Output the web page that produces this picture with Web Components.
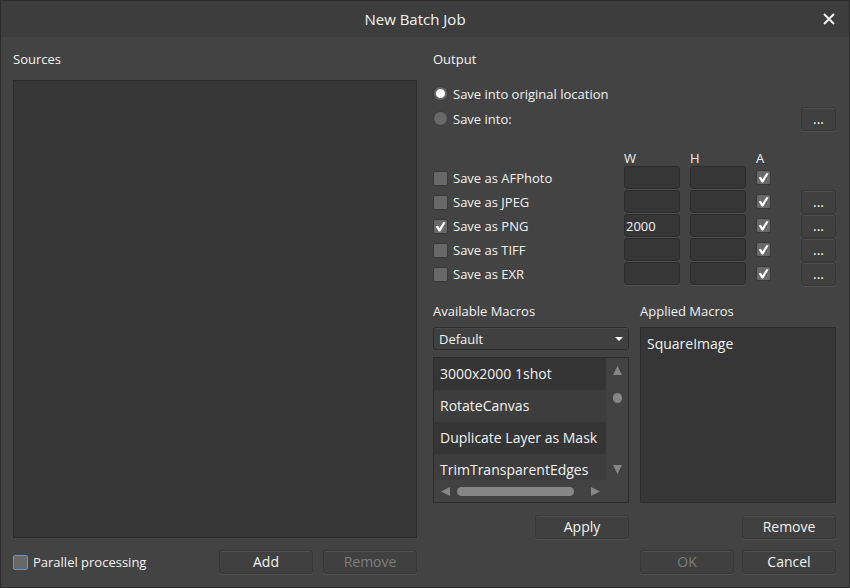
<!DOCTYPE html>
<html lang="en">
<head>
<meta charset="utf-8">
<title>New Batch Job</title>
<style>
body {
  margin: 0;
  background: #434343;
  color: #f2f2f2;
  font: 13px/20px "Open Sans", "Noto Sans", sans-serif;
}
</style>
</head>
<body>

<batch-dialog heading="New Batch Job">
  <sources-panel slot="sources"></sources-panel>
  <output-panel slot="output"></output-panel>
</batch-dialog>

<script>
const baseStyles = `
<style>
* { box-sizing: border-box; }
:host { display: block; box-sizing: border-box; }
h1, h2 { margin: 0; font-size: 13px; line-height: 20px; font-weight: 400; }
button, input, select { margin: 0; font: inherit; color: inherit; }
</style>
`;

function define(name, html, setup) {
  const template = document.createElement('template');
  template.innerHTML = baseStyles + html;

  customElements.define(name, class extends HTMLElement {
    constructor() {
      super();
      this.attachShadow({ mode: 'open' }).appendChild(template.content.cloneNode(true));
    }
    connectedCallback() {
      if (setup) setup(this, this.shadowRoot);
    }
  });
}

// push button, "small" is the one with the three dots
define('dialog-button', `
<style>
:host { width: 94px; height: 24px; }
:host([small]) { width: 35px; }
button {
  display: block;
  width: 100%;
  height: 24px;
  padding: 0;
  border: 1px solid #373737;
  border-radius: 3px;
  background: #404040;
  box-shadow: inset 0 1px #4f4f4f, 0 1px #505050;
  font-size: 14px;
  line-height: 22px;
}
button:disabled { color: #7d7d7d; }
</style>
<button type="button"><slot></slot></button>
`, (host, root) => {
  const button = root.querySelector('button');
  button.disabled = host.hasAttribute('disabled');
  if (host.title) button.setAttribute('aria-label', host.title);
});

// tick box with its label
define('check-box', `
<style>
label { display: flex; align-items: center; gap: 5px; white-space: nowrap; }
input {
  appearance: none;
  flex: none;
  width: 15px;
  height: 15px;
  border: 1px solid #383838;
  border-radius: 2px;
  background: #686868;
}
.box { display: grid; }
.box > * { grid-area: 1 / 1; }
svg { width: 15px; height: 15px; visibility: hidden; pointer-events: none; }
input:checked + svg { visibility: visible; }
:host([active]) input { border-color: #6b8fc9; }
</style>
<label>
  <span class="box">
    <input type="checkbox">
    <svg viewBox="0 0 15 15"><path d="M2.700 7.600 5 6.800l1.500 2.500 3.900-6.300 2.200.4-5.300 9H5.700z" fill="#fff"/></svg>
  </span>
  <slot></slot>
</label>
`, (host, root) => {
  const input = root.querySelector('input');
  input.checked = host.hasAttribute('checked');
  if (host.title) input.setAttribute('aria-label', host.title);
});

define('size-field', `
<style>
input {
  display: block;
  width: 100%;
  height: 23px;
  padding: 0 1px;
  border: 1px solid #2c2c2c;
  border-radius: 3px;
  background: #363636;
  box-shadow: 0 1px #515151;
  outline: none;
}
</style>
<input type="text">
`, (host, root) => {
  const input = root.querySelector('input');
  input.value = host.getAttribute('value') || '';
  input.setAttribute('aria-label', host.title);
});

define('save-location', `
<style>
.row { display: flex; align-items: center; justify-content: space-between; height: 25px; }
label { display: flex; align-items: center; gap: 5px; }
input {
  appearance: none;
  width: 15px;
  height: 15px;
  border: 1px solid #3a3a3a;
  border-radius: 50%;
  background: #686868;
}
input:checked { background: radial-gradient(circle, #fff 4px, #686868 5px); }
</style>
<div class="row">
  <label><input type="radio" name="location" checked>Save into original location</label>
</div>
<div class="row">
  <label><input type="radio" name="location">Save into:</label>
  <dialog-button small title="Choose folder">...</dialog-button>
</div>
`);

define('format-grid', `
<style>
.grid {
  display: grid;
  grid-template-columns: 1fr 56px 56px 35px 35px;
  grid-template-rows: 16px;
  grid-auto-rows: 24px;
  column-gap: 10px;
  align-items: start;
}
.head { line-height: 16px; }
check-box { padding-top: 2px; }
check-box[title] { padding-top: 4px; }
</style>
<div class="grid"></div>
`, (host, root) => {
  const formats = [
    { name: 'AFPhoto', options: false },
    { name: 'JPEG', options: true },
    { name: 'PNG', options: true, checked: true, width: '2000' },
    { name: 'TIFF', options: true },
    { name: 'EXR', options: true },
  ];
  let html = `
    <span></span>
    <span class="head">W</span>
    <span class="head">H</span>
    <span class="head">A</span>
    <span></span>`;
  formats.forEach(f => {
    html += `
    <check-box ${f.checked ? 'checked' : ''}>Save as ${f.name}</check-box>
    <size-field title="${f.name} width" value="${f.width || ''}"></size-field>
    <size-field title="${f.name} height"></size-field>
    <check-box checked title="${f.name} keep aspect"></check-box>
    ${f.options ? `<dialog-button small title="${f.name} options">...</dialog-button>` : '<span></span>'}`;
  });
  root.querySelector('.grid').innerHTML = html;
});

// dark framed area, grows with its column
define('list-frame', `
<style>
:host {
  flex: 1;
  min-height: 0;
  border: 1px solid #2b2b2b;
  background: #363636;
  font-size: 14px;
  line-height: 32px;
}
</style>
<slot></slot>
`);

define('macro-browser', `
<style>
:host {
  flex: 1;
  min-height: 0;
  display: grid;
  grid-template: minmax(0, 1fr) 22px / minmax(0, 1fr) 22px;
  border: 1px solid #2b2b2b;
  background: #424242;
}
ul { margin: 0; padding: 0; list-style: none; overflow: hidden; }
li { height: 32px; padding: 0 6px; font-size: 14px; line-height: 32px; white-space: nowrap; background: #3d3d3d; }
li:nth-child(odd) { background: #353535; }
.bar { display: flex; align-items: center; }
.vertical { flex-direction: column; padding: 8px 0 6px; }
.horizontal { padding: 0 6px 0 7px; gap: 7px; }
.track { flex: 1; display: flex; }
.thumb { background: #868686; border-radius: 5px; }
.vertical .track { padding-top: 18px; }
.vertical .thumb { width: 9px; height: 10px; }
.horizontal .thumb { width: 117px; height: 9px; }
svg { flex: none; width: 9px; height: 9px; fill: #868686; }
</style>
<ul>
  <li>3000x2000 1shot</li>
  <li>RotateCanvas</li>
  <li>Duplicate Layer as Mask</li>
  <li>TrimTransparentEdges</li>
</ul>
<div class="bar vertical">
  <svg viewBox="0 0 9 9"><path d="M0 9 4.500 0 9 9z"/></svg>
  <div class="track"><div class="thumb"></div></div>
  <svg viewBox="0 0 9 9"><path d="M0 0h9L4.500 9z"/></svg>
</div>
<div class="bar horizontal">
  <svg viewBox="0 0 9 9"><path d="M9 0v9L0 4.500z"/></svg>
  <div class="track"><div class="thumb"></div></div>
  <svg viewBox="0 0 9 9"><path d="M0 0v9l9-4.500z"/></svg>
</div>
`);

define('macro-select', `
<style>
:host { display: grid; align-items: center; margin-bottom: 7px; }
select, svg { grid-area: 1 / 1; }
select {
  appearance: none;
  width: 100%;
  height: 23px;
  padding: 0 20px 0 5px;
  border: 1px solid #2c2c2c;
  border-radius: 3px;
  background: #404040;
  box-shadow: inset 0 1px #4b4b4b;
}
svg { justify-self: end; width: 8px; height: 4px; margin-right: 6px; fill: #fff; pointer-events: none; }
</style>
<select aria-label="Macro category"><option>Default</option></select>
<svg viewBox="0 0 8 4"><path d="M0 0h8L4 4z"/></svg>
`);

define('sources-panel', `
<style>
:host { display: flex; flex-direction: column; min-height: 0; }
h2 { margin-bottom: 11px; }
.footer { display: flex; align-items: center; gap: 10px; margin-top: 12px; }
check-box { flex: 1; }
</style>
<h2>Sources</h2>
<list-frame></list-frame>
<div class="footer">
  <check-box active>Parallel processing</check-box>
  <dialog-button>Add</dialog-button>
  <dialog-button disabled>Remove</dialog-button>
</div>
`);

define('output-panel', `
<style>
:host { display: flex; flex-direction: column; min-height: 0; }
save-location { margin: 12px 0 19px; }
.macros {
  flex: 1;
  display: grid;
  grid-template: minmax(0, 1fr) / 1fr 1fr;
  gap: 11px;
  min-height: 0;
  margin-top: 15px;
}
.column { display: flex; flex-direction: column; }
.column h2 { margin-bottom: 6px; }
.column dialog-button { align-self: flex-end; margin-top: 12px; }
list-frame span { padding: 0 6px; }
.footer { display: flex; justify-content: flex-end; gap: 8px; margin-top: 11px; }
</style>
<h2>Output</h2>
<save-location></save-location>
<format-grid></format-grid>
<div class="macros">
  <div class="column">
    <h2>Available Macros</h2>
    <macro-select></macro-select>
    <macro-browser></macro-browser>
    <dialog-button>Apply</dialog-button>
  </div>
  <div class="column">
    <h2>Applied Macros</h2>
    <list-frame><span>SquareImage</span></list-frame>
    <dialog-button>Remove</dialog-button>
  </div>
</div>
<div class="footer">
  <dialog-button disabled>OK</dialog-button>
  <dialog-button>Cancel</dialog-button>
</div>
`);

define('batch-dialog', `
<style>
:host {
  display: grid;
  grid-template-rows: 36px minmax(0, 1fr);
  height: 100vh;
  min-height: 520px;
  border: 1px solid #2b2b2b;
}
header {
  display: grid;
  grid-template-columns: 20px 1fr 40px;
  align-items: center;
  background: #3d3d3d;
}
h1 { grid-column: 2; font-size: 15px; text-align: center; }
header button { display: grid; place-items: center; height: 36px; padding: 0; border: 0; background: none; }
header svg { width: 12px; height: 12px; stroke: #f2f2f2; stroke-width: 2; }
main {
  display: grid;
  grid-template: minmax(0, 1fr) / minmax(0, 404fr) minmax(0, 403fr);
  gap: 16px;
  padding: 12px 13px 13px 12px;
}
</style>
<header>
  <h1></h1>
  <button type="button" aria-label="Close">
    <svg viewBox="0 0 12 12"><path d="m1 1 10 10M11 1 1 11"/></svg>
  </button>
</header>
<main>
  <slot name="sources"></slot>
  <slot name="output"></slot>
</main>
`, (host, root) => {
  root.querySelector('h1').textContent = host.getAttribute('heading');
});
</script>
</body>
</html>
